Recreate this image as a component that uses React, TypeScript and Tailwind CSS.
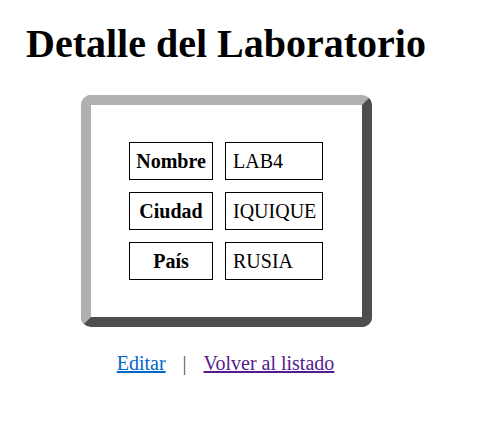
export default function App() {
  const rows = [
    { label: "Nombre", value: "LAB4" },
    { label: "Ciudad", value: "IQUIQUE" },
    { label: "País", value: "RUSIA" },
  ];

  return (
    <div className="min-h-[427px] bg-white pl-[26px] pt-[21px] font-['Liberation_Serif',serif] text-black">
      <h1 className="text-[40px] font-bold leading-[46px]">Detalle del Laboratorio</h1>

      <div className="ml-[55px] mt-[28px] w-[291px]">
        <div className="flex h-[232px] items-center justify-center rounded-[10px] border-[10px] border-t-[#b0b0b0] border-l-[#b0b0b0] border-r-[#4e4e4e] border-b-[#4e4e4e] bg-white pr-px">
          <div className="grid grid-cols-[84px_98px] gap-3">
            {rows.map((r) => (
              <div key={r.label} className="contents">
                <div className="flex h-[38px] items-center justify-center border border-black text-[20px] font-bold leading-[23px]">
                  {r.label}
                </div>
                <div className="flex h-[38px] items-center border border-black pl-[7px] text-[20px] leading-[23px]">
                  {r.value}
                </div>
              </div>
            ))}
          </div>
        </div>

        <div className="mt-[25px] pr-[2px] text-center text-[20px] leading-[23px]">
          <a href="#" className="text-[#0066cc] underline">
            Editar
          </a>
          <span className="mx-[17px] text-[#555]">|</span>
          <a href="#" className="text-[#551a8b] underline">
            Volver al listado
          </a>
        </div>
      </div>
    </div>
  );
}
